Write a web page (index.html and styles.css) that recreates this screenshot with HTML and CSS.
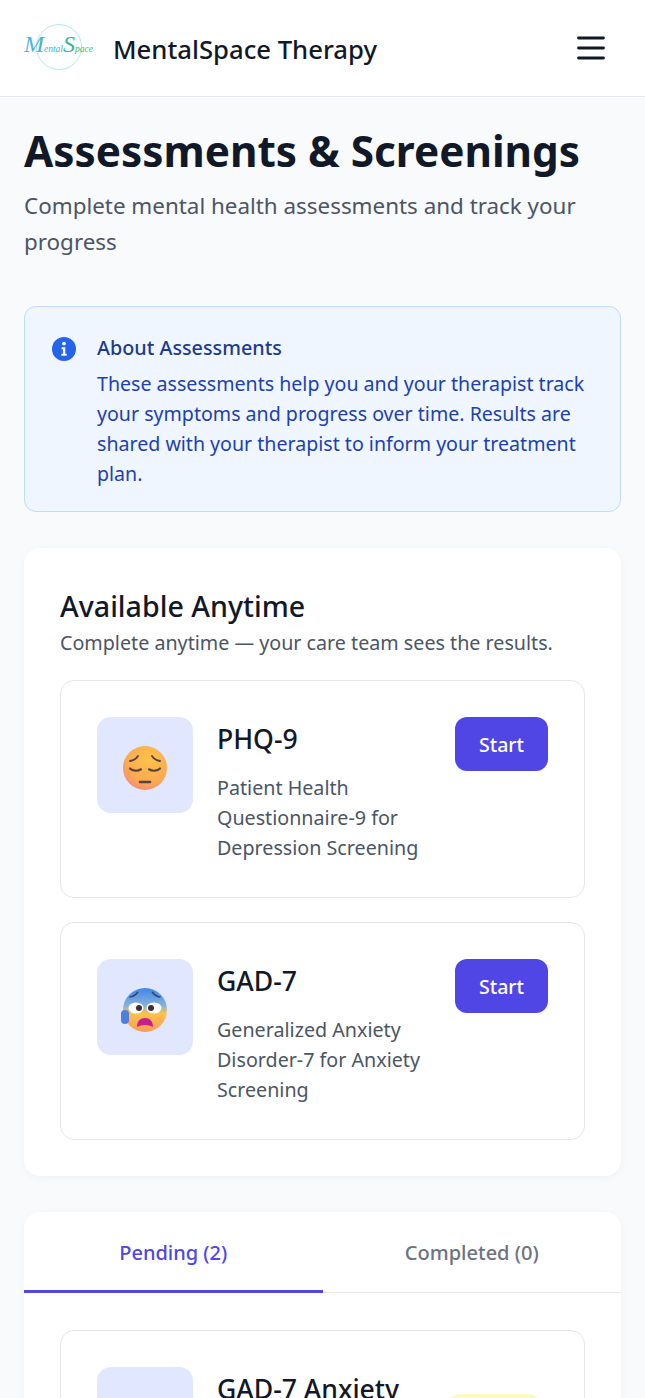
FILE: index.html
```html
<!DOCTYPE html>
<html>
<head>
<meta charset="utf-8">
<title>Assessments &amp; Screenings</title>
<link rel="stylesheet" href="styles.css">
</head>
<body>
<div class="page">

<header class="topbar">
  <div class="brand">
    <svg class="logo" viewBox="0 0 72 52" width="72" height="52">
      <defs>
        <linearGradient id="logoGrad" x1="0" y1="0" x2="1" y2="0">
          <stop offset="0" stop-color="#4fb4dc"/>
          <stop offset="0.5" stop-color="#3fb6c8"/>
          <stop offset="0.75" stop-color="#3cb46e"/>
          <stop offset="1" stop-color="#3cb46e"/>
        </linearGradient>
      </defs>
      <circle cx="35" cy="26" r="22.500" fill="none" stroke="#a5dded" stroke-width="0.800"/>
      <text class="logo-text" x="0" y="31" fill="url(#logoGrad)"><tspan class="logo-cap">M</tspan>ental<tspan class="logo-cap">S</tspan>pace</text>
    </svg>
    <span class="brand-name">MentalSpace Therapy</span>
  </div>
  <svg class="menu" viewBox="0 0 28 24" width="28" height="24">
    <path d="M1.500 2h25M1.500 12h25M1.500 22h25" stroke="#111827" stroke-width="2.800" stroke-linecap="round"/>
  </svg>
</header>

<main class="content">
  <h1>Assessments &amp; Screenings</h1>
  <p class="lead">Complete mental health assessments and track your progress</p>

  <section class="notice">
    <svg class="notice-icon" viewBox="0 0 24 24" width="24" height="24">
      <circle cx="12" cy="12" r="12" fill="#2563eb"/>
      <circle cx="12" cy="6.600" r="1.900" fill="#fff"/>
      <path d="M9.600 10.200h3.700v6.600h1.400v2H9.400v-2h1.500v-4.600H9.600z" fill="#fff"/>
    </svg>
    <div>
      <h3>About Assessments</h3>
      <p>These assessments help you and your therapist track your symptoms and progress over time. Results are shared with your therapist to inform your treatment plan.</p>
    </div>
  </section>

  <section class="card anytime">
    <h2>Available Anytime</h2>
    <p class="card-sub">Complete anytime — your care team sees the results.</p>

    <div class="item">
      <div class="item-icon">
        <svg viewBox="0 0 48 48" width="48" height="48">
          <defs>
            <radialGradient id="faceSad" cx="0.6" cy="0.3" r="0.8">
              <stop offset="0" stop-color="#fdc24a"/>
              <stop offset="0.65" stop-color="#fbaa50"/>
              <stop offset="1" stop-color="#f4867e"/>
            </radialGradient>
          </defs>
          <circle cx="24" cy="24" r="22" fill="url(#faceSad)"/>
          <path d="M9 17c3.500-.7 6.300-2.400 8-5M39 17c-3.500-.7-6.300-2.400-8-5" fill="none" stroke="#5a4044" stroke-width="1.900" stroke-linecap="round"/>
          <path d="M9 24.500c2.500 2.600 7.500 3 11 .8M28 25.300c3.500 2.200 8.500 1.800 11-.8" fill="none" stroke="#5a4044" stroke-width="2.200" stroke-linecap="round"/>
          <path d="M19 38h10" stroke="#5a4044" stroke-width="2.600" stroke-linecap="round"/>
        </svg>
      </div>
      <div class="item-body">
        <h3>PHQ-9</h3>
        <p>Patient Health Questionnaire-9 for Depression Screening</p>
      </div>
      <button class="start">Start</button>
    </div>

    <div class="item">
      <div class="item-icon">
        <svg viewBox="0 0 48 48" width="48" height="48">
          <defs>
            <linearGradient id="faceFear" x1="0" y1="0" x2="0" y2="1">
              <stop offset="0" stop-color="#3f86e8"/>
              <stop offset="0.4" stop-color="#86b2dc"/>
              <stop offset="0.58" stop-color="#fdc24a"/>
              <stop offset="1" stop-color="#fb9a5a"/>
            </linearGradient>
          </defs>
          <circle cx="24" cy="24" r="22" fill="url(#faceFear)"/>
          <rect x="0" y="24" width="8" height="14" rx="4" fill="#4d7fe0"/>
          <path d="M9 11c2.800-.4 5.500-1.800 7.500-4.500M39 11c-2.800-.4-5.500-1.800-7.500-4.500" fill="none" stroke="#35456e" stroke-width="1.700" stroke-linecap="round"/>
          <ellipse cx="15" cy="22" rx="7.500" ry="5.500" fill="#fff"/>
          <ellipse cx="33" cy="22" rx="7.500" ry="5.500" fill="#fff"/>
          <circle cx="18" cy="22" r="3" fill="#3e2d38"/>
          <circle cx="30" cy="22" r="3" fill="#3e2d38"/>
          <path d="M16 41c0-6 3.500-9 8-9s8 3 8 9c-4.500-2.800-11.500-2.800-16 0z" fill="#c41f8c"/>
        </svg>
      </div>
      <div class="item-body">
        <h3>GAD-7</h3>
        <p>Generalized Anxiety Disorder-7 for Anxiety Screening</p>
      </div>
      <button class="start">Start</button>
    </div>
  </section>

  <section class="card tabs-card">
    <div class="tabs">
      <div class="tab active">Pending (2)</div>
      <div class="tab">Completed (0)</div>
    </div>
    <div class="tab-body">
      <div class="item">
        <div class="item-icon"></div>
        <div class="item-body">
          <h3>GAD-7 Anxiety</h3>
        </div>
        <span class="badge"></span>
      </div>
    </div>
  </section>
</main>

</div>
</body>
</html>
```

FILE: styles.css
```css
* {
    box-sizing: border-box;
}

body {
    margin: 0;
    font-family: "Noto Sans", sans-serif;
    color: #111827;
    background-color: #f8fafc;
}

.page {
    height: 100vh;
    overflow: hidden;
}

/* Top bar */
.topbar {
    display: flex;
    align-items: center;
    justify-content: space-between;
    height: 97px;
    padding: 0 40px 0 24px;
    background-color: #fff;
    border-bottom: 1px solid #e5e7eb;
}

.brand {
    display: flex;
    align-items: center;
    gap: 17px;
}

.logo {
    margin-top: -3px;
}

.logo-text {
    font-family: "Liberation Serif", serif;
    font-style: italic;
    font-size: 9.500px;
}

.logo-cap {
    font-size: 24px;
}

.brand-name {
    margin-top: 3px;
    font-size: 25.700px;
    font-weight: 500;
}

/* Page heading */
.content {
    padding: 21px 24px 0;
}

h1 {
    margin: 0 0 4px;
    font-size: 42.300px;
    line-height: 66px;
    font-weight: 700;
}

.lead {
    margin: 0 0 46px;
    font-size: 22.400px;
    line-height: 36px;
    color: #4b5563;
}

/* Info box */
.notice {
    display: flex;
    gap: 21px;
    padding: 26px 27px 22px;
    margin-bottom: 36px;
    background-color: #eff6ff;
    border: 1px solid #bfdbfe;
    border-radius: 12px;
}

.notice-icon {
    flex: none;
    margin-top: 4px;
}

.notice h3 {
    margin: 0 0 6px;
    font-size: 19.800px;
    line-height: 30px;
    font-weight: 500;
    color: #1e3a8a;
}

.notice p {
    margin: 0;
    font-size: 19.600px;
    line-height: 30px;
    color: #1e40af;
}

/* Cards */
.card {
    background-color: #fff;
    border-radius: 16px;
    box-shadow: 0 2px 8px rgba(0, 0, 0, 0.04);
}

.anytime {
    padding: 36px;
    margin-bottom: 36px;
}

.card h2 {
    margin: -1px 0 1px;
    font-size: 28.600px;
    line-height: 46px;
    font-weight: 500;
}

.card-sub {
    margin: -1px 0 23px;
    font-size: 19.700px;
    line-height: 28px;
    color: #4b5563;
}

.item {
    display: flex;
    align-items: flex-start;
    gap: 24px;
    padding: 36px 36px 34px;
    border: 1px solid #e5e7eb;
    border-radius: 14px;
}

.item + .item {
    margin-top: 24px;
}

.item-icon {
    flex: none;
    display: flex;
    align-items: center;
    justify-content: center;
    width: 96px;
    height: 96px;
    padding-top: 6px;
    background-color: #e0e7ff;
    border-radius: 14px;
}

.item-body {
    flex: 1;
}

.item-body h3 {
    margin: 0 0 12px;
    font-size: 26.600px;
    line-height: 44px;
    font-weight: 500;
}

.item-body p {
    margin: 0;
    font-size: 19.700px;
    line-height: 30px;
    color: #4b5563;
}

.start {
    flex: none;
    width: 93px;
    height: 54px;
    padding-bottom: 0;
    font-family: inherit;
    font-size: 19.500px;
    font-weight: 500;
    color: #fff;
    background-color: #4f46e5;
    border: none;
    border-radius: 12px;
}

/* Tabs */
.tabs {
    display: flex;
    border-bottom: 1px solid #e5e7eb;
}

.tab {
    flex: 1;
    height: 81px;
    padding-top: 25px;
    margin-bottom: -1px;
    text-align: center;
    font-size: 20px;
    line-height: 32px;
    font-weight: 500;
    color: #6b7280;
}

.tab.active {
    color: #4f46e5;
    border-bottom: 3px solid #4f46e5;
}

.tab-body {
    padding: 37px 36px 36px;
}

.badge {
    flex: none;
    width: 102px;
    height: 36px;
    margin: 27px 3px 0 0;
    background-color: #fef9c3;
    border-radius: 18px;
}
```
